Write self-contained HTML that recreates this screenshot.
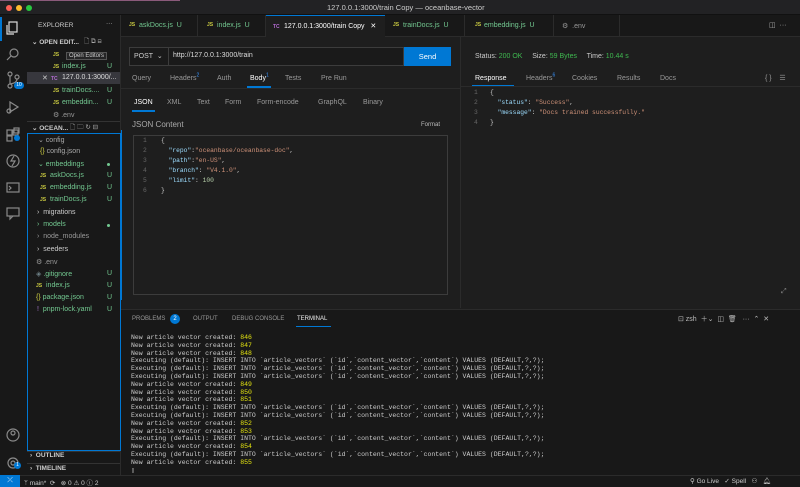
<!DOCTYPE html>
<html><head><style>
*{margin:0;padding:0;box-sizing:border-box}
body{width:800px;height:487px;overflow:hidden;background:#1e1e1e;font-family:"Liberation Sans",sans-serif;color:#ccc;position:relative}
.a{position:absolute;white-space:nowrap}
.m{font-family:"Liberation Mono",monospace}
.g{color:#73c991}
.js{color:#cbcb41;font-size:5px;font-weight:bold;margin-top:-2px}
.s{font-size:7px}
.t{font-size:6.5px}
sup{line-height:0}
</style></head><body>
<!-- title bar -->
<div class="a" style="left:0;top:0;width:800px;height:15px;background:#222224;border-bottom:1px solid #111"></div>
<div class="a" style="left:0;top:0;width:180px;height:1px;background:#8a5a7a"></div>
<div class="a" style="left:6px;top:5px;width:6px;height:6px;border-radius:50%;background:#fe5f57"></div>
<div class="a" style="left:16px;top:5px;width:6px;height:6px;border-radius:50%;background:#febc2e"></div>
<div class="a" style="left:26px;top:5px;width:6px;height:6px;border-radius:50%;background:#28c840"></div>
<div class="a" style="left:327px;top:3px;font-size:7.5px;color:#ccc">127.0.0.1:3000/train Copy — oceanbase-vector</div>
<!-- activity bar -->
<div class="a" style="left:0;top:15px;width:27px;height:460px;background:#181818"></div>
<div class="a" style="left:0;top:17px;width:1.5px;height:24px;background:#0078d4"></div>
<svg class="a" style="left:0;top:15px" width="27" height="460" fill="none" stroke="#8a8a8a" stroke-width="1.2">
<rect x="9" y="7" width="8" height="10" stroke="#ddd"/><path d="M7 10v9h7" stroke="#ddd"/>
<circle cx="14" cy="38" r="4"/><path d="M11 41l-4 4"/>
<circle cx="10" cy="59" r="2"/><circle cx="10" cy="71" r="2"/><circle cx="17" cy="62" r="2"/><path d="M10 61v8M17 64q0 4-7 5"/>
<path d="M10 87l8 5-8 5z"/><circle cx="9" cy="96" r="2"/>
<rect x="7" y="115" width="5" height="5"/><rect x="13" y="115" width="5" height="5"/><rect x="7" y="121" width="5" height="5"/><rect x="14" y="113" width="5" height="5"/>
<circle cx="13" cy="146" r="6"/><path d="M14 141l-3 5h4l-3 5"/>
<rect x="7" y="168" width="12" height="9"/><path d="M9 171l2 2-2 2"/>
<rect x="7" y="193" width="12" height="8"/><path d="M10 201v3l3-3"/>
<circle cx="13" cy="420" r="6"/><circle cx="13" cy="418" r="2"/>
<circle cx="13" cy="448" r="5"/><circle cx="13" cy="448" r="2"/>
</svg>
<div class="a" style="left:14px;top:82px;width:10px;height:7px;border-radius:4px;background:#0078d4;color:#fff;font-size:5px;text-align:center;line-height:7px">10</div>
<div class="a" style="left:14px;top:135px;width:6px;height:6px;border-radius:50%;background:#0078d4"></div>
<div class="a" style="left:14px;top:462px;width:7px;height:7px;border-radius:50%;background:#0078d4;color:#fff;font-size:5px;text-align:center;line-height:7px">1</div>
<!-- sidebar -->
<div class="a" style="left:27px;top:15px;width:94px;height:460px;background:#181818;border-right:1px solid #2b2b2b"></div>
<div class="a t" style="left:38px;top:22px;color:#ccc">EXPLORER</div>
<div class="a t" style="left:106px;top:20px">···</div>
<div class="a t" style="left:32px;top:38px;font-weight:bold">⌄ OPEN EDIT...</div>
<div class="a t" style="left:84px;top:37px;color:#aaa">🗋 ⧉ ⊟</div>
<div class="a js" style="left:53px;top:54px">JS</div>
<div class="a s" style="left:66px;top:52px;background:#252526;border:1px solid #555;color:#ccc;padding:0 2px;font-size:6px">Open Editors</div>
<div class="a js" style="left:53px;top:66px">JS</div><div class="a s g" style="left:62px;top:63px">index.js</div><div class="a s g" style="left:107px;top:63px">U</div>
<div class="a" style="left:27px;top:72px;width:93px;height:12px;background:#37373d"></div>
<div class="a s" style="left:42px;top:74px">✕</div><div class="a" style="left:51px;top:76px;font-size:5px;color:#b36bd1;font-weight:bold">TC</div><div class="a s" style="left:62px;top:74px;color:#ddd">127.0.0.1:3000/...</div>
<div class="a js" style="left:53px;top:90px">JS</div><div class="a s g" style="left:62px;top:87px">trainDocs....</div><div class="a s g" style="left:107px;top:87px">U</div>
<div class="a js" style="left:53px;top:102px">JS</div><div class="a s g" style="left:62px;top:99px">embeddin...</div><div class="a s g" style="left:107px;top:99px">U</div>
<div class="a s" style="left:53px;top:111px;color:#999">⚙ .env</div>
<div class="a" style="left:27px;top:121px;width:93px;height:1px;background:#333"></div>
<div class="a t" style="left:32px;top:124px;font-weight:bold">⌄ OCEAN...</div>
<div class="a t" style="left:70px;top:123px;color:#aaa">🗋 🗀 ↻ ⊟</div>
<div class="a" style="left:27px;top:133px;width:94px;height:318px;border:1px solid #0078d4"></div>
<div class="a s" style="left:38px;top:136px;color:#aaa">⌄ config</div>
<div class="a s" style="left:40px;top:148px;color:#aaa"><span style="color:#cbcb41">{}</span> config.json</div>
<div class="a s g" style="left:38px;top:160px">⌄ embeddings</div><div class="a" style="left:107px;top:163px;width:3px;height:3px;border-radius:50%;background:#73c991"></div>
<div class="a js" style="left:40px;top:175px">JS</div><div class="a s g" style="left:50px;top:172px">askDocs.js</div><div class="a s g" style="left:107px;top:172px">U</div>
<div class="a js" style="left:40px;top:187px">JS</div><div class="a s g" style="left:50px;top:184px">embedding.js</div><div class="a s g" style="left:107px;top:184px">U</div>
<div class="a js" style="left:40px;top:199px">JS</div><div class="a s g" style="left:50px;top:196px">trainDocs.js</div><div class="a s g" style="left:107px;top:196px">U</div>
<div class="a s" style="left:37px;top:209px;color:#ccc">›&nbsp; migrations</div>
<div class="a s g" style="left:37px;top:221px">›&nbsp; models</div><div class="a" style="left:107px;top:224px;width:3px;height:3px;border-radius:50%;background:#73c991"></div>
<div class="a s" style="left:37px;top:233px;color:#999">›&nbsp; node_modules</div>
<div class="a s" style="left:37px;top:246px;color:#ccc">›&nbsp; seeders</div>
<div class="a s" style="left:36px;top:258px;color:#999">⚙ .env</div>
<div class="a s g" style="left:36px;top:270px"><span style="color:#6d8086">◈</span> .gitignore</div><div class="a s g" style="left:107px;top:270px">U</div>
<div class="a js" style="left:36px;top:285px">JS</div><div class="a s g" style="left:46px;top:282px">index.js</div><div class="a s g" style="left:107px;top:282px">U</div>
<div class="a s g" style="left:36px;top:294px"><span style="color:#cbcb41">{}</span> package.json</div><div class="a s g" style="left:107px;top:294px">U</div>
<div class="a s g" style="left:37px;top:306px"><span style="color:#a074c4">!</span>&nbsp; pnpm-lock.yaml</div><div class="a s g" style="left:107px;top:306px">U</div>
<div class="a" style="left:27px;top:451px;width:93px;height:1px;background:#333"></div>
<div class="a t" style="left:30px;top:452px;font-weight:bold">›&nbsp; OUTLINE</div>
<div class="a" style="left:27px;top:463px;width:93px;height:1px;background:#333"></div>
<div class="a t" style="left:30px;top:465px;font-weight:bold">›&nbsp; TIMELINE</div>
<!-- tabs -->
<div class="a" style="left:121px;top:15px;width:679px;height:22px;background:#181818;border-bottom:1px solid #2b2b2b"></div>
<div class="a" style="left:121px;top:15px;width:77px;height:22px;border-right:1px solid #2b2b2b"></div>
<div class="a js" style="left:129px;top:24px">JS</div><div class="a s g" style="left:139px;top:22px">askDocs.js&nbsp; U</div>
<div class="a" style="left:198px;top:15px;width:68px;height:22px;border-right:1px solid #2b2b2b"></div>
<div class="a js" style="left:207px;top:24px">JS</div><div class="a s g" style="left:217px;top:22px">index.js&nbsp; U</div>
<div class="a" style="left:266px;top:15px;width:119px;height:22px;background:#1e1e1e;border-top:1px solid #0078d4"></div>
<div class="a" style="left:273px;top:24px;font-size:5px;color:#b36bd1;font-weight:bold">TC</div><div class="a s" style="left:284px;top:22px;color:#fff">127.0.0.1:3000/train Copy&nbsp;&nbsp; ✕</div>
<div class="a" style="left:385px;top:15px;width:80px;height:22px;border-right:1px solid #2b2b2b"></div>
<div class="a js" style="left:393px;top:24px">JS</div><div class="a s g" style="left:403px;top:22px">trainDocs.js&nbsp; U</div>
<div class="a" style="left:465px;top:15px;width:89px;height:22px;border-right:1px solid #2b2b2b"></div>
<div class="a js" style="left:475px;top:24px">JS</div><div class="a s g" style="left:484px;top:22px">embedding.js&nbsp; U</div>
<div class="a" style="left:554px;top:15px;width:66px;height:22px;border-right:1px solid #2b2b2b"></div>
<div class="a s" style="left:562px;top:22px;color:#999">⚙&nbsp; .env</div>
<div class="a s" style="left:769px;top:21px;color:#aaa">◫ &nbsp;···</div>
<!-- request -->
<div class="a" style="left:129px;top:47px;width:275px;height:19px;border:1px solid #3c3c3c;background:#1a1a1a"></div>
<div class="a s" style="left:134px;top:52px">POST &nbsp;⌄</div>
<div class="a" style="left:168px;top:47px;width:1px;height:19px;background:#3c3c3c"></div>
<div class="a s" style="left:173px;top:52px;color:#ddd">http://127.0.0.1:3000/train</div>
<div class="a" style="left:404px;top:47px;width:47px;height:19px;background:#0078d4;color:#fff;font-size:7.5px;text-align:center;line-height:19px">Send</div>
<div class="a s" style="left:132px;top:75px;color:#999">Query</div>
<div class="a s" style="left:170px;top:75px;color:#999">Headers<sup style="color:#3794ff;font-size:5px">2</sup></div>
<div class="a s" style="left:217px;top:75px;color:#999">Auth</div>
<div class="a s" style="left:250px;top:75px;color:#fff">Body<sup style="color:#3794ff;font-size:5px">1</sup></div>
<div class="a" style="left:247px;top:86px;width:24px;height:1.5px;background:#0078d4"></div>
<div class="a s" style="left:285px;top:75px;color:#999">Tests</div>
<div class="a s" style="left:321px;top:75px;color:#999">Pre Run</div>
<div class="a" style="left:121px;top:88px;width:339px;height:1px;background:#2b2b2b"></div>
<div class="a s" style="left:134px;top:99px;color:#fff">JSON</div>
<div class="a" style="left:132px;top:110px;width:23px;height:1.5px;background:#0078d4"></div>
<div class="a s" style="left:167px;top:99px;color:#999">XML</div>
<div class="a s" style="left:197px;top:99px;color:#999">Text</div>
<div class="a s" style="left:225px;top:99px;color:#999">Form</div>
<div class="a s" style="left:257px;top:99px;color:#999">Form-encode</div>
<div class="a s" style="left:318px;top:99px;color:#999">GraphQL</div>
<div class="a s" style="left:363px;top:99px;color:#999">Binary</div>
<div class="a" style="left:132px;top:120px;font-size:8px;color:#aaa">JSON Content</div>
<div class="a" style="left:421px;top:122px;font-size:6px;color:#bbb">Format</div>
<div class="a" style="left:133px;top:135px;width:315px;height:160px;border:1px solid #3c3c3c;background:#1e1e1e"></div>
<div class="a m" style="left:143px;top:136px;font-size:6.3px;line-height:10px;color:#666">1<br>2<br>3<br>4<br>5<br>6</div>
<div class="a m" style="left:161px;top:136px;font-size:6.3px;line-height:10px;color:#ccc">{<br>&nbsp;&nbsp;<span style="color:#9cdcfe">"repo"</span>:<span style="color:#ce9178">"oceanbase/oceanbase-doc"</span>,<br>&nbsp;&nbsp;<span style="color:#9cdcfe">"path"</span>:<span style="color:#ce9178">"en-US"</span>,<br>&nbsp;&nbsp;<span style="color:#9cdcfe">"branch"</span>: <span style="color:#ce9178">"V4.1.0"</span>,<br>&nbsp;&nbsp;<span style="color:#9cdcfe">"limit"</span>: <span style="color:#b5cea8">100</span><br>}</div>
<div class="a" style="left:121px;top:130px;width:1px;height:170px;background:#0078d4"></div>
<!-- response -->
<div class="a" style="left:460px;top:37px;width:1px;height:271px;background:#2b2b2b"></div>
<div class="a s" style="left:475px;top:53px;color:#ccc">Status: <span style="color:#3fb950">200 OK</span>&nbsp;&nbsp;&nbsp;&nbsp; Size: <span style="color:#3fb950">59 Bytes</span>&nbsp;&nbsp;&nbsp;&nbsp; Time: <span style="color:#3fb950">10.44 s</span></div>
<div class="a s" style="left:475px;top:75px;color:#fff">Response</div>
<div class="a" style="left:472px;top:85px;width:42px;height:1.5px;background:#0078d4"></div>
<div class="a s" style="left:526px;top:75px;color:#999">Headers<sup style="color:#3794ff;font-size:5px">6</sup></div>
<div class="a s" style="left:572px;top:75px;color:#999">Cookies</div>
<div class="a s" style="left:617px;top:75px;color:#999">Results</div>
<div class="a s" style="left:660px;top:75px;color:#999">Docs</div>
<div class="a s" style="left:765px;top:74px;color:#999">{ }&nbsp;&nbsp;&nbsp; ☰</div>
<div class="a" style="left:461px;top:86px;width:339px;height:1px;background:#2b2b2b"></div>
<div class="a m" style="left:474px;top:88px;font-size:6.3px;line-height:10px;color:#666">1<br>2<br>3<br>4</div>
<div class="a m" style="left:490px;top:88px;font-size:6.3px;line-height:10px;color:#ccc">{<br>&nbsp;&nbsp;<span style="color:#9cdcfe">"status"</span>: <span style="color:#ce9178">"Success"</span>,<br>&nbsp;&nbsp;<span style="color:#9cdcfe">"message"</span>: <span style="color:#ce9178">"Docs trained successfully."</span><br>}</div>
<div class="a s" style="left:781px;top:288px;color:#888">⤢</div>
<!-- panel -->
<div class="a" style="left:121px;top:309px;width:679px;height:166px;background:#181818;border-top:1px solid #2b2b2b"></div>
<div class="a" style="left:132px;top:316px;font-size:6px;color:#999">PROBLEMS</div>
<div class="a" style="left:170px;top:314px;width:10px;height:10px;border-radius:50%;background:#0078d4;color:#fff;font-size:6px;text-align:center;line-height:10px">2</div>
<div class="a" style="left:193px;top:316px;font-size:6px;color:#999">OUTPUT</div>
<div class="a" style="left:232px;top:316px;font-size:6px;color:#999">DEBUG CONSOLE</div>
<div class="a" style="left:297px;top:316px;font-size:6px;color:#eee">TERMINAL</div>
<div class="a" style="left:296px;top:326px;width:35px;height:1px;background:#0078d4"></div>
<div class="a" style="left:678px;top:314px;font-size:7px;color:#bbb">⊡ zsh&nbsp; ＋⌄&nbsp; ◫&nbsp; 🗑&nbsp;&nbsp; ···&nbsp; ⌃&nbsp; ✕</div>
<div class="a m" style="left:131px;top:334px;font-size:6.5px;line-height:7.8px;color:#ccc">New article vector created: <span style="color:#e5e510">846</span><br>New article vector created: <span style="color:#e5e510">847</span><br>New article vector created: <span style="color:#e5e510">848</span><br>Executing (default): INSERT INTO `article_vectors` (`id`,`content_vector`,`content`) VALUES (DEFAULT,?,?);<br>Executing (default): INSERT INTO `article_vectors` (`id`,`content_vector`,`content`) VALUES (DEFAULT,?,?);<br>Executing (default): INSERT INTO `article_vectors` (`id`,`content_vector`,`content`) VALUES (DEFAULT,?,?);<br>New article vector created: <span style="color:#e5e510">849</span><br>New article vector created: <span style="color:#e5e510">850</span><br>New article vector created: <span style="color:#e5e510">851</span><br>Executing (default): INSERT INTO `article_vectors` (`id`,`content_vector`,`content`) VALUES (DEFAULT,?,?);<br>Executing (default): INSERT INTO `article_vectors` (`id`,`content_vector`,`content`) VALUES (DEFAULT,?,?);<br>New article vector created: <span style="color:#e5e510">852</span><br>New article vector created: <span style="color:#e5e510">853</span><br>Executing (default): INSERT INTO `article_vectors` (`id`,`content_vector`,`content`) VALUES (DEFAULT,?,?);<br>New article vector created: <span style="color:#e5e510">854</span><br>Executing (default): INSERT INTO `article_vectors` (`id`,`content_vector`,`content`) VALUES (DEFAULT,?,?);<br>New article vector created: <span style="color:#e5e510">855</span><br>▯</div>
<!-- status bar -->
<div class="a" style="left:0;top:475px;width:800px;height:12px;background:#181818;border-top:1px solid #2b2b2b"></div>
<div class="a" style="left:0;top:475px;width:20px;height:12px;background:#0078d4;color:#fff;font-size:7px;text-align:center;line-height:12px">⤫</div>
<div class="a" style="left:24px;top:477px;font-size:6.5px;color:#ccc">ᛘ main*&nbsp; ⟳&nbsp;&nbsp; ⊗ 0 ⚠ 0 ⓘ 2</div>
<div class="a" style="left:690px;top:477px;font-size:6.5px;color:#ccc">⚲ Go Live&nbsp;&nbsp; ✓ Spell&nbsp;&nbsp; ⚇&nbsp;&nbsp; 🔔︎</div>
</body></html>
